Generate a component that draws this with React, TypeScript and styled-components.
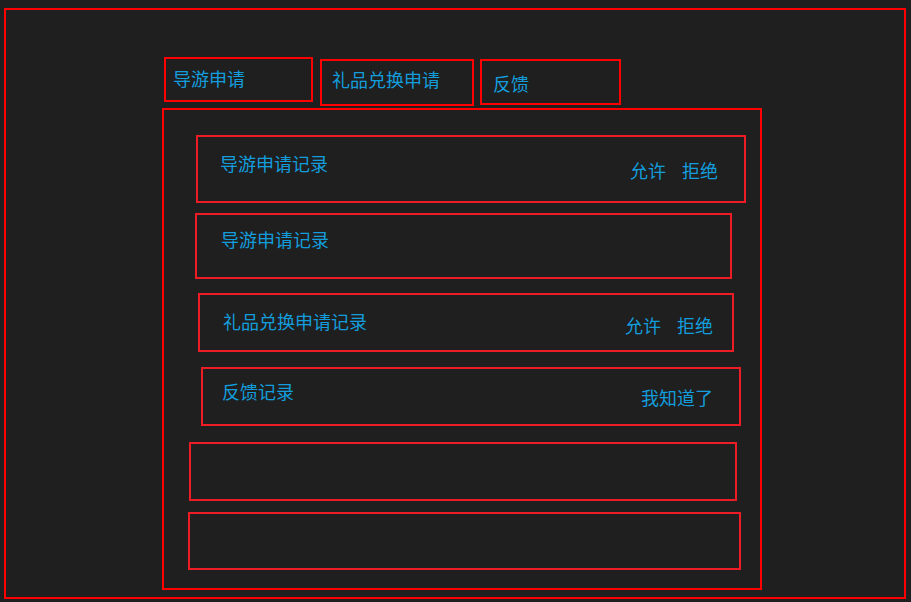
import React from "react";
import styled, { createGlobalStyle } from "styled-components";

const GlobalStyle = createGlobalStyle`
  html, body {
    margin: 0;
    padding: 0;
    background: #1f1f1f;
  }
  * { box-sizing: border-box; }
`;

const Frame = styled.div`
  margin: 8px 0 0 4px;
  width: 902px;
  height: 591px;
  border: 2px solid #ff0000;
  display: flex;
  flex-direction: column;
  font-family: "Noto Sans CJK SC", "Noto Sans", sans-serif;
  color: #139ddd;
  font-size: 18px;
  line-height: 18px;
`;

const TabBar = styled.div`
  display: flex;
  align-items: flex-start;
  margin-left: 158px;
  padding-top: 47px;
`;

const Tab = styled.div<{ $w: number; $h: number; $mt: number; $ml: number; $pl: number; $pt: number }>`
  width: ${(p) => p.$w}px;
  height: ${(p) => p.$h}px;
  margin-top: ${(p) => p.$mt}px;
  margin-left: ${(p) => p.$ml}px;
  padding: ${(p) => p.$pt}px 0 0 ${(p) => p.$pl}px;
  border: 2px solid #ff0000;
  white-space: nowrap;
`;

const Panel = styled.div`
  margin: 2px 0 0 156px;
  width: 600px;
  height: 482px;
  border: 2px solid #ff0000;
  padding-top: 25px;
  display: flex;
  flex-direction: column;
`;

const Row = styled.div<{ $w: number; $h: number; $mt: number; $ml: number; $pt: number; $pl: number; $pr: number }>`
  display: flex;
  justify-content: space-between;
  align-items: flex-start;
  width: ${(p) => p.$w}px;
  height: ${(p) => p.$h}px;
  margin: ${(p) => p.$mt}px 0 0 ${(p) => p.$ml}px;
  padding: ${(p) => p.$pt}px ${(p) => p.$pr}px 0 ${(p) => p.$pl}px;
  border: 2px solid #ee1c25;
  flex-shrink: 0;
`;

const Title = styled.span`
  white-space: nowrap;
`;

const Actions = styled.div<{ $mt: number }>`
  display: flex;
  gap: 16px;
  margin-top: ${(p) => p.$mt}px;
`;

const ActionLink = styled.span`
  cursor: pointer;
  white-space: nowrap;
`;

type RowData = {
  title?: string;
  actions?: string[];
  w: number;
  h: number;
  mt: number;
  ml: number;
  pt: number;
  pl: number;
  pr: number;
  amt: number;
};

const rows: RowData[] = [
  { title: "导游申请记录", actions: ["允许", "拒绝"], w: 550, h: 68, mt: 0, ml: 32, pt: 17, pl: 22, pr: 26, amt: 7 },
  { title: "导游申请记录", w: 537, h: 66, mt: 10, ml: 31, pt: 15, pl: 24, pr: 0, amt: 0 },
  { title: "礼品兑换申请记录", actions: ["允许", "拒绝"], w: 536, h: 59, mt: 14, ml: 34, pt: 17, pl: 23, pr: 19, amt: 4 },
  { title: "反馈记录", actions: ["我知道了"], w: 540, h: 59, mt: 15, ml: 37, pt: 13, pl: 19, pr: 26, amt: 6 },
  { w: 548, h: 59, mt: 16, ml: 25, pt: 0, pl: 0, pr: 0, amt: 0 },
  { w: 553, h: 58, mt: 11, ml: 24, pt: 0, pl: 0, pr: 0, amt: 0 },
];

export default function App() {
  return (
    <>
      <GlobalStyle />
      <Frame>
        <TabBar>
          <Tab $w={149} $h={45} $mt={0} $ml={0} $pl={7} $pt={10}>导游申请</Tab>
          <Tab $w={154} $h={47} $mt={2} $ml={7} $pl={10} $pt={9}>礼品兑换申请</Tab>
          <Tab $w={141} $h={46} $mt={2} $ml={6} $pl={11} $pt={13}>反馈</Tab>
        </TabBar>
        <Panel>
          {rows.map((r, i) => (
            <Row key={i} $w={r.w} $h={r.h} $mt={r.mt} $ml={r.ml} $pt={r.pt} $pl={r.pl} $pr={r.pr}>
              {r.title ? <Title>{r.title}</Title> : null}
              {r.actions ? (
                <Actions $mt={r.amt}>
                  {r.actions.map((a) => (
                    <ActionLink key={a}>{a}</ActionLink>
                  ))}
                </Actions>
              ) : null}
            </Row>
          ))}
        </Panel>
      </Frame>
    </>
  );
}
